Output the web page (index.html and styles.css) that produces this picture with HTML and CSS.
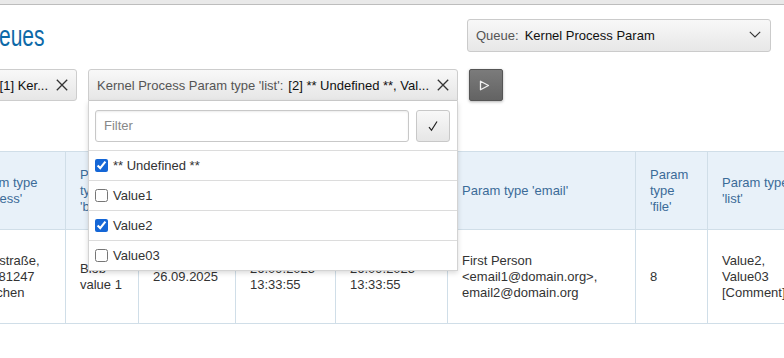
FILE: index.html
```html
<!DOCTYPE html>
<html>
<head>
<meta charset="utf-8">
<link rel="stylesheet" href="styles.css">
</head>
<body>
<div class="topbar"></div>
<div class="page">
  <div class="head">
    <h1 class="title">Queues</h1>
    <div class="select">
      <span class="lbl">Queue:</span>
      <span class="val">Kernel Process Param</span>
      <svg class="chev" width="12" height="7" viewBox="0 0 12 7"><path d="M0.8 0.8L6 6L11.2 0.8" stroke="#333" stroke-width="1.1" fill="none"/></svg>
    </div>
  </div>

  <div class="filters">
    <div class="chip chip1">
      <span class="lbl">Queue:</span>
      <span class="val">[1] Ker...</span>
      <svg class="x" width="12" height="12" viewBox="0 0 12 12"><path d="M0.8 0.8L11.2 11.2M11.2 0.8L0.8 11.2" stroke="#333" stroke-width="1.3"/></svg>
    </div>
    <div class="chip chip2 open">
      <span class="lbl">Kernel Process Param type 'list':</span>
      <span class="val">[2] ** Undefined **, Val...</span>
      <svg class="x" width="12" height="12" viewBox="0 0 12 12"><path d="M0.8 0.8L11.2 11.2M11.2 0.8L0.8 11.2" stroke="#333" stroke-width="1.3"/></svg>
      <div class="panel">
        <div class="search">
          <div class="input">Filter</div>
          <div class="ok"><svg width="12" height="12" viewBox="0 0 12 12"><path d="M2 7.2L4.5 10.3L10 1.5" stroke="#222" stroke-width="1.2" fill="none"/></svg></div>
        </div>
        <label class="opt"><input type="checkbox" checked><span>** Undefined **</span></label>
        <label class="opt"><input type="checkbox"><span>Value1</span></label>
        <label class="opt"><input type="checkbox" checked><span>Value2</span></label>
        <label class="opt"><input type="checkbox"><span>Value03</span></label>
      </div>
    </div>
    <div class="play"><svg width="11" height="11" viewBox="0 0 11 11"><path d="M1.5 1.2L9.5 5.5L1.5 9.8Z" stroke="#f2f2f2" stroke-width="1.3" fill="none" stroke-linejoin="round"/></svg></div>
  </div>

  <table class="grid">
    <colgroup>
      <col style="width:109px"><col style="width:73px"><col style="width:97px"><col style="width:100px"><col style="width:112px"><col style="width:188px"><col style="width:72px"><col style="width:98px">
    </colgroup>
    <thead>
      <tr>
        <th>Param type 'address'</th>
        <th>Param type 'blob'</th>
        <th>Param type 'date'</th>
        <th>Param type 'datetime'</th>
        <th>Param type 'datetime'</th>
        <th>Param type 'email'</th>
        <th>Param type 'file'</th>
        <th>Param type 'list'</th>
      </tr>
    </thead>
    <tbody>
      <tr>
        <td>Mainstraße,<br>PLZ 81247<br>München</td>
        <td>Blob value 1</td>
        <td>26.09.2025</td>
        <td>26.09.2025 13:33:55</td>
        <td>26.09.2025 13:33:55</td>
        <td>First Person<br>&lt;email1@domain.org&gt;,<br>email2@domain.org</td>
        <td>8</td>
        <td>Value2,<br>Value03<br>[Comment]</td>
      </tr>
    </tbody>
  </table>
</div>
</body>
</html>
```

FILE: styles.css
```css
* { box-sizing: border-box; }
html, body { margin: 0; padding: 0; }
body {
  overflow: hidden;
  font-family: "Liberation Sans", Arial, sans-serif;
  font-size: 13px;
  color: #333;
  background: #fff;
}
.topbar {
  height: 5px;
  background: #e9e9e9;
  border-bottom: 1px solid #bdbdbd;
}
.page {
  margin-left: -60px;
  margin-right: 13px;
}
.head {
  display: flex;
  justify-content: space-between;
  align-items: center;
  padding-top: 14px;
}
.title {
  margin: 0 0 0 31px;
  font-size: 30px;
  font-weight: normal;
  color: #0d69a8;
  line-height: 30px;
  white-space: nowrap;
  transform: scaleX(0.7);
  transform-origin: left center;
}
.select {
  width: 304px;
  height: 33px;
  display: flex;
  align-items: center;
  padding: 0 9px 0 8px;
  border: 1px solid #cbcbcb;
  border-radius: 3px;
  background: linear-gradient(#f8f8f8, #e7e7e7);
}
.select .lbl { color: #555; margin-right: 6px; }
.select .val { color: #111; flex: 1; }
.chev { margin-top: -3px; }

.filters {
  display: flex;
  gap: 11px;
  margin-top: 17px;
  align-items: flex-start;
}
.chip {
  position: relative;
  height: 32px;
  display: flex;
  align-items: center;
  padding: 0 8px;
  border: 1px solid #cdcdcd;
  border-radius: 3px;
  background: linear-gradient(#f8f8f8, #e6e6e6);
  white-space: nowrap;
}
.chip .lbl { color: #555; margin-right: 5px; }
.chip .val { color: #111; overflow: hidden; text-overflow: ellipsis; flex: 1; }
.chip .x { flex: none; margin-left: 8px; }
.chip1 {
  width: 137px;
  justify-content: flex-end;
  overflow: hidden;
}
.chip1 .val { flex: none; }
.chip2 { width: 370px; }
.chip2.open { border-bottom-left-radius: 0; border-bottom-right-radius: 0; }

.play {
  width: 34px;
  height: 32px;
  display: flex;
  align-items: center;
  justify-content: center;
  border: 1px solid #555;
  border-radius: 2px;
  background: linear-gradient(#7b7b7b, #636363);
  box-shadow: 0 1px 3px rgba(0,0,0,0.3);
  padding-right: 3px;
}

.panel {
  position: absolute;
  left: -1px;
  top: 31px;
  width: 370px;
  background: #fff;
  border: 1px solid #d3d3d3;
  border-top: none;
  box-shadow: 0 2px 5px rgba(0,0,0,0.15);
  z-index: 5;
}
.search {
  display: flex;
  gap: 7px;
  padding: 9px 7px 8px 6px;
}
.input {
  width: 314px;
  height: 32px;
  border: 1px solid #c8c8c8;
  border-radius: 3px;
  box-shadow: inset 0 1px 2px rgba(0,0,0,0.08);
  color: #888;
  padding: 0 8px;
  line-height: 30px;
  font-size: 13px;
}
.ok {
  width: 34px;
  height: 32px;
  border: 1px solid #c8c8c8;
  border-radius: 3px;
  background: linear-gradient(#f8f8f8, #e6e6e6);
  display: flex;
  align-items: center;
  justify-content: center;
}
.opt {
  display: flex;
  align-items: center;
  height: 30px;
  border-top: 1px solid #dcdcdc;
  padding-left: 6px;
  color: #333;
}
.opt input {
  margin: 0 5px 0 0;
  width: 13px;
  height: 13px;
  accent-color: #1466d6;
}

.grid {
  margin-top: 50px;
  margin-left: 16px;
  border-collapse: collapse;
  table-layout: fixed;
  width: 849px;
}
.grid th, .grid td {
  border: 1px solid #d0dee8;
  padding: 0 14px;
  line-height: 16px;
  text-align: left;
  vertical-align: middle;
  font-weight: normal;
}
.grid th {
  background: #e8f1f9;
  color: #3b6b98;
  height: 78px;
}
.grid td {
  height: 94px;
  color: #333;
}
```
